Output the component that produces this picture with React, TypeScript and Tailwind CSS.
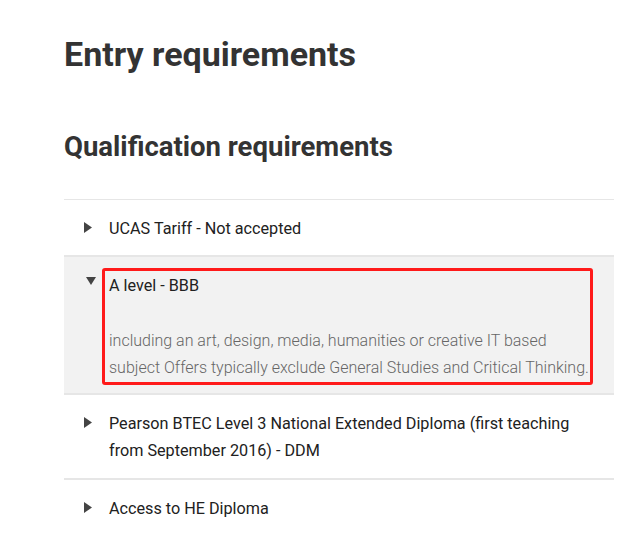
import React from "react";

function TriRight() {
  return (
    <svg width="8" height="11" viewBox="0 0 8 11" className="mt-[7px]">
      <polygon points="0,0 8,5.5 0,11" fill="#444444" />
    </svg>
  );
}

function TriDown() {
  return (
    <svg width="10" height="8" viewBox="0 0 10 8" className="mt-[5px] ml-[2px]">
      <polygon points="0,0 10,0 5,8" fill="#444444" />
    </svg>
  );
}

export default function App() {
  return (
    <div className="min-h-[536px] bg-white font-['Roboto','Liberation_Sans',sans-serif] text-[#212121]">
      <div className="pl-[64px] pr-[8px]">
        <h1 className="pt-[34px] text-[34px] leading-[40px] font-bold text-[#333333]">
          Entry requirements
        </h1>
        <h2 className="mt-[56px] text-[27.5px] leading-[34px] font-bold text-[#333333]">
          Qualification requirements
        </h2>
        <div className="mt-[35px] border-t border-[#e6e6e6]">
          <div className="flex pl-5 pr-4 pt-[15px] pb-[13px] text-[16.2px] leading-[27px]">
            <div className="w-[25px] shrink-0 flex items-start">
              <TriRight />
            </div>
            <div>UCAS Tariff - Not accepted</div>
          </div>
          <div className="relative flex border-t-2 border-[#e6e6e6] bg-[#f2f2f2] pl-5 pr-4 pt-[15px] pb-[12px] text-[16.2px] leading-[27px]">
            <div className="w-[25px] shrink-0 flex items-start">
              <TriDown />
            </div>
            <div>
              <div>A level - BBB</div>
              <p className="mt-[28px] text-[16px] font-light text-[#666666]">
                including an art, design, media, humanities or creative IT based subject Offers typically exclude General Studies and Critical Thinking.
              </p>
            </div>
            <div className="pointer-events-none absolute left-[38px] top-[11px] h-[117px] w-[491px] rounded-[3px] border-[3px] border-[#ff1a1a]" />
          </div>
          <div className="flex border-t-2 border-[#e6e6e6] pl-5 pr-4 pt-[15px] pb-[14px] text-[16.2px] leading-[27px]">
            <div className="w-[25px] shrink-0 flex items-start">
              <TriRight />
            </div>
            <div>
              Pearson BTEC Level 3 National Extended Diploma (first teaching from September 2016) - DDM
            </div>
          </div>
          <div className="flex border-t-2 border-[#e6e6e6] pl-5 pr-4 pt-[15px] pb-[13px] text-[16.2px] leading-[27px]">
            <div className="w-[25px] shrink-0 flex items-start">
              <TriRight />
            </div>
            <div>Access to HE Diploma</div>
          </div>
        </div>
      </div>
    </div>
  );
}
